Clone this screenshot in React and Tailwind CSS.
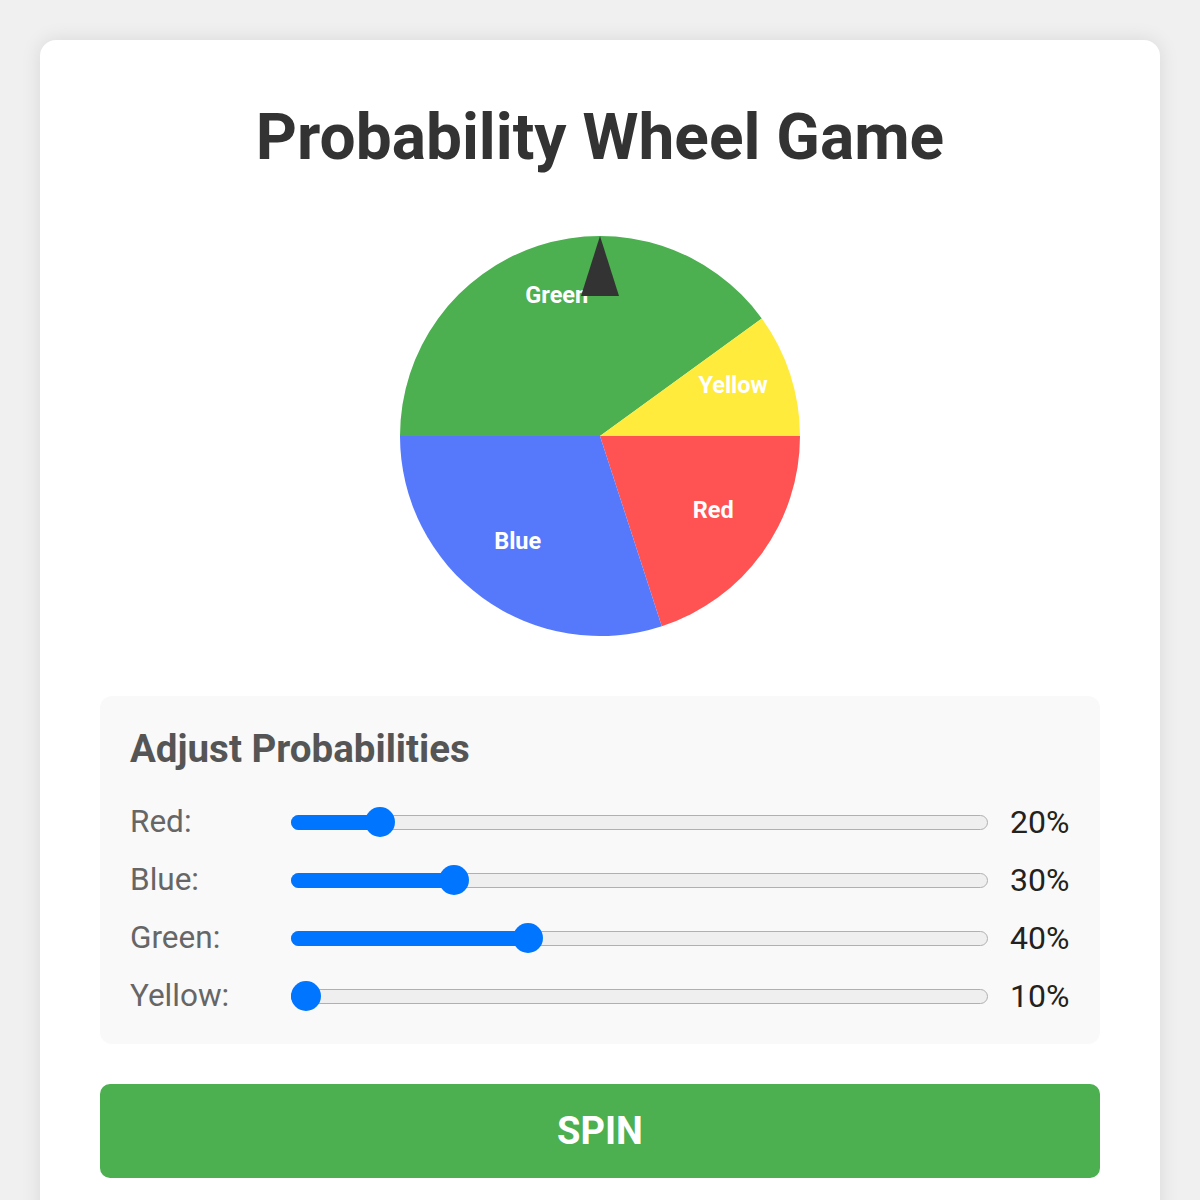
import React, { useState } from 'react';

const SEGMENTS = [
  { name: 'Red', color: '#ff5252' },
  { name: 'Blue', color: '#5679fb' },
  { name: 'Green', color: '#4caf50' },
  { name: 'Yellow', color: '#ffeb3b' },
];

const CX = 200;
const CY = 200;
const R = 200;

function Wheel({ probs }) {
  const total = SEGMENTS.reduce((sum, s) => sum + probs[s.name], 0);
  let start = 0;

  const slices = SEGMENTS.map((seg) => {
    const sweep = (probs[seg.name] / total) * Math.PI * 2;
    const end = start + sweep;
    const x1 = CX + R * Math.cos(start);
    const y1 = CY + R * Math.sin(start);
    const x2 = CX + R * Math.cos(end);
    const y2 = CY + R * Math.sin(end);
    const large = sweep > Math.PI ? 1 : 0;
    const mid = start + sweep / 2;
    const slice = {
      ...seg,
      d: `M ${CX} ${CY} L ${x1} ${y1} A ${R} ${R} 0 ${large} 1 ${x2} ${y2} Z`,
      tx: CX + 140 * Math.cos(mid),
      ty: CY + 140 * Math.sin(mid),
    };
    start = end;
    return slice;
  });

  return (
    <svg width="400" height="400" viewBox="0 0 400 400" className="block">
      {slices.map((s) => (
        <path key={s.name} d={s.d} fill={s.color} />
      ))}
      {slices.map((s) => (
        <text
          key={s.name + '-label'}
          x={s.tx}
          y={s.ty}
          textAnchor="middle"
          fill="#fff"
          fontFamily="Roboto, Arial, sans-serif"
          fontWeight="700"
          fontSize="23.5"
        >
          {s.name}
        </text>
      ))}
      <polygon points="181,60 219,60 200,0" fill="#333333" />
    </svg>
  );
}

function Slider({ value }) {
  // range 10..100, thumb 30px wide
  const frac = (value - 10) / 90;
  const pos = `calc(15px + ${frac} * (100% - 30px))`;
  return (
    <div className="relative flex-1 h-[30px] flex items-center">
      <div className="w-full h-[15px] rounded-full border-[1.5px] border-[#b0b0b0] bg-[#efefef]" />
      <div
        className="absolute left-0 top-[7.5px] h-[15px] rounded-l-full bg-[#0075ff]"
        style={{ width: pos }}
      />
      <div
        className="absolute top-0 w-[30px] h-[30px] -ml-[15px] rounded-full bg-[#0075ff]"
        style={{ left: pos }}
      />
    </div>
  );
}

export default function App() {
  const [probs] = useState({ Red: 20, Blue: 30, Green: 40, Yellow: 10 });

  return (
    <div className="min-h-screen bg-[#f0f0f0] pt-[40px] font-[Roboto,Arial,sans-serif]">
      <div className="mx-auto w-[1120px] bg-white rounded-[16px] shadow-[0_0_20px_rgba(0,0,0,0.1)] px-[60px] pt-[62px] pb-[60px]">
        <h1 className="text-[64px] leading-[72px] font-bold text-[#333] text-center">
          Probability Wheel Game
        </h1>

        <div className="flex justify-center mt-[62px]">
          <Wheel probs={probs} />
        </div>

        <div className="mt-[60px] bg-[#f9f9f9] rounded-[12px] p-[30px]">
          <h3 className="text-[38.5px] leading-[45px] font-bold text-[#555]">Adjust Probabilities</h3>
          <div className="mt-[33px] flex flex-col gap-[22px]">
            {SEGMENTS.map((s) => (
              <div key={s.name} className="flex items-center h-[36px]">
                <span className="w-[161px] text-[31.5px] leading-[36px] text-[#666]">{s.name}:</span>
                <Slider value={probs[s.name]} />
                <span className="ml-[22px] w-[60px] text-[32px] leading-[36px] text-[#222] whitespace-nowrap">
                  {probs[s.name]}%
                </span>
              </div>
            ))}
          </div>
        </div>

        <button className="mt-[40px] w-full h-[94px] rounded-[10px] bg-[#4caf50] text-white text-[38px] font-bold">
          SPIN
        </button>
      </div>
    </div>
  );
}
